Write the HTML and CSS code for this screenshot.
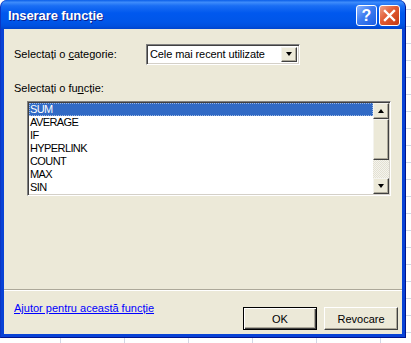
FILE: index.html
```html
<!DOCTYPE html>
<html lang="ro">
<head>
  <meta charset="UTF-8" />
  <title>Inserare funcție</title>
  <link rel="stylesheet" href="styles.css">
</head>
<body>

  <div class="dialog">
    <!-- Title bar -->
    <div class="titlebar">
      <span class="title">Inserare funcție</span>
      <div class="caption-buttons">
        <span class="cap-btn help">?</span>
        <span class="cap-btn close">
          <svg width="13" height="13" viewBox="0 0 13 13">
            <path d="M2 2 L11 11 M11 2 L2 11" stroke="#fff" stroke-width="2.4" stroke-linecap="square"/>
          </svg>
        </span>
      </div>
    </div>

    <div class="content">
      <div class="row category">
        <label>Selectați o <u>c</u>ategorie:</label>
        <div class="combo">
          <span class="combo-text">Cele mai recent utilizate</span>
          <span class="drop-btn"><span class="arrow-down"></span></span>
        </div>
      </div>

      <label class="list-label">Selectați o fu<u>n</u>cție:</label>

      <div class="listbox">
        <ul class="items">
          <li class="selected">SUM</li>
          <li>AVERAGE</li>
          <li>IF</li>
          <li>HYPERLINK</li>
          <li>COUNT</li>
          <li>MAX</li>
          <li>SIN</li>
        </ul>
        <div class="scrollbar">
          <span class="sb-btn"><span class="arrow-up"></span></span>
          <span class="sb-thumb"></span>
          <span class="sb-track"></span>
          <span class="sb-btn"><span class="arrow-down"></span></span>
        </div>
      </div>

      <div class="spacer"></div>

      <div class="separator"></div>

      <div class="footer">
        <a href="#" class="help-link">Ajutor pentru această funcție</a>
        <div class="buttons">
          <button class="btn default">OK</button>
          <button class="btn">Revocare</button>
        </div>
      </div>
    </div>
  </div>

</body>
</html>
```

FILE: styles.css
```css
/* Reset and base */
* { margin: 0; padding: 0; box-sizing: border-box; }
body {
  width: 411px;
  height: 343px;
  overflow: hidden;
  font-family: "Liberation Sans", Arial, sans-serif;
  font-size: 11px;
  color: #000;
  /* spreadsheet grid behind the dialog */
  background-color: #fff;
  background-image:
    linear-gradient(to right, #d0d7e5 1px, transparent 1px),
    linear-gradient(to bottom, #d0d7e5 1px, transparent 1px);
  background-size: 64px 17px;
  background-position: 60px 9px;
}

/* Window frame */
.dialog {
  width: 406px;
  height: 338px;
  display: flex;
  flex-direction: column;
  background: #0842d6;
  border-radius: 7px 7px 0 0;
  border-bottom: 1px solid #00138c;
  padding: 0 3px 3px 3px;
  border-left: 1px solid #0b36c4;
  border-right: 1px solid #00138c;
}

/* Title bar */
.titlebar {
  height: 29px;
  margin: 0 -3px;
  padding: 0 5px 0 7px;
  display: flex;
  align-items: center;
  justify-content: space-between;
  border-radius: 7px 7px 0 0;
  background: linear-gradient(to bottom, #0a5ee8 0%, #3e8cfb 8%, #1a6ef4 20%, #0058ee 45%, #0056e9 75%, #0050df 90%, #0044cc 100%);
}
.title {
  color: #fff;
  font-weight: bold;
  font-size: 13px;
  letter-spacing: -0.1px;
  text-shadow: 1px 1px 0 #0a1e8c;
  margin-top: 1px;
}
.caption-buttons {
  display: flex;
  gap: 2px;
  margin-top: 2px;
}
.cap-btn {
  width: 21px;
  height: 21px;
  border: 1px solid #fff;
  border-radius: 3px;
  display: flex;
  align-items: center;
  justify-content: center;
}
.help {
  background: linear-gradient(135deg, #8cb4ff 0%, #3d7cf0 45%, #1c5ee4 100%);
  color: #fff;
  font-weight: bold;
  font-size: 16px;
}
.close {
  background: linear-gradient(135deg, #f0a188 0%, #e15a32 45%, #c43a12 100%);
}

/* Client area */
.content {
  flex: 1;
  background: #ece9d8;
  display: flex;
  flex-direction: column;
  padding: 0 0 0 10px;
}

.row {
  display: flex;
  align-items: center;
}
.category {
  margin-top: 15px;
  height: 20px;
}
.category label {
  width: 132px;
}

/* Combo box */
.combo {
  width: 154px;
  height: 21px;
  background: #fff;
  border-top: 1px solid #808080;
  border-left: 1px solid #808080;
  border-right: 1px solid #fff;
  border-bottom: 1px solid #fff;
  box-shadow: inset 1px 1px 0 #404040, inset -1px -1px 0 #d4d0c8;
  display: flex;
  align-items: center;
  justify-content: space-between;
  padding: 2px 2px 2px 3px;
}
.combo-text { letter-spacing: -0.1px; }
.drop-btn {
  width: 16px;
  height: 15px;
  background: #ece9d8;
  border-top: 1px solid #f4f3ee;
  border-left: 1px solid #f4f3ee;
  border-right: 1px solid #404040;
  border-bottom: 1px solid #404040;
  box-shadow: inset -1px -1px 0 #aca899;
  display: flex;
  align-items: center;
  justify-content: center;
}

.arrow-down, .arrow-up {
  width: 0;
  height: 0;
  border-left: 3.5px solid transparent;
  border-right: 3.5px solid transparent;
}
.arrow-down { border-top: 4px solid #000; }
.arrow-up { border-bottom: 4px solid #000; }

.list-label {
  margin-top: 18px;
  line-height: 13px;
}

/* List box */
.listbox {
  margin: 6px 0 0 13px;
  width: 364px;
  height: 95px;
  background: #fff;
  border-top: 1px solid #808080;
  border-left: 1px solid #808080;
  border-right: 1px solid #fff;
  border-bottom: 1px solid #fff;
  box-shadow: inset 1px 1px 0 #404040, inset -1px -1px 0 #d4d0c8;
  padding: 1px;
  display: flex;
}
.items {
  list-style: none;
  flex: 1;
  font-size: 11px;
  letter-spacing: -0.6px;
}
.items li {
  height: 13px;
  line-height: 13px;
  padding-left: 1px;
}
.items li.selected {
  background: #316ac5;
  color: #fff;
  outline: 1px dotted #9cb7e3;
  outline-offset: -1px;
}

/* Scrollbar */
.scrollbar {
  width: 16px;
  display: flex;
  flex-direction: column;
}
.sb-btn, .sb-thumb {
  background: #ece9d8;
  border-top: 1px solid #f4f3ee;
  border-left: 1px solid #f4f3ee;
  border-right: 1px solid #404040;
  border-bottom: 1px solid #404040;
  box-shadow: inset -1px -1px 0 #aca899;
}
.sb-btn {
  height: 16px;
  display: flex;
  align-items: center;
  justify-content: center;
}
.sb-thumb { height: 41px; }
.sb-track {
  flex: 1;
  background-color: #f4f3ee;
  background-image:
    linear-gradient(45deg, #e4e1d2 25%, transparent 25%, transparent 75%, #e4e1d2 75%),
    linear-gradient(45deg, #e4e1d2 25%, transparent 25%, transparent 75%, #e4e1d2 75%);
  background-size: 2px 2px;
  background-position: 0 0, 1px 1px;
}

.spacer { flex: 1; }

.separator {
  margin-left: -10px;
  height: 2px;
  border-top: 1px solid #aca899;
  border-bottom: 1px solid #fff;
}

/* Footer */
.footer {
  display: flex;
  justify-content: space-between;
  align-items: flex-start;
  height: 43px;
  padding: 10px 4px 0 0;
}
.help-link {
  color: #0000ff;
  text-decoration: underline;
  margin-top: 1px;
}
.buttons {
  display: flex;
  gap: 7px;
  margin-top: 6px;
}
.btn {
  width: 74px;
  height: 23px;
  font-family: inherit;
  font-size: 11px;
  background: #ece9d8;
  border-top: 1px solid #fff;
  border-left: 1px solid #fff;
  border-right: 1px solid #404040;
  border-bottom: 1px solid #404040;
  box-shadow: inset -1px -1px 0 #aca899;
  color: #000;
}
.btn.default {
  border: 1px solid #000;
  box-shadow: inset 1px 1px 0 #fff, inset -1px -1px 0 #404040, inset -2px -2px 0 #aca899;
}
```
